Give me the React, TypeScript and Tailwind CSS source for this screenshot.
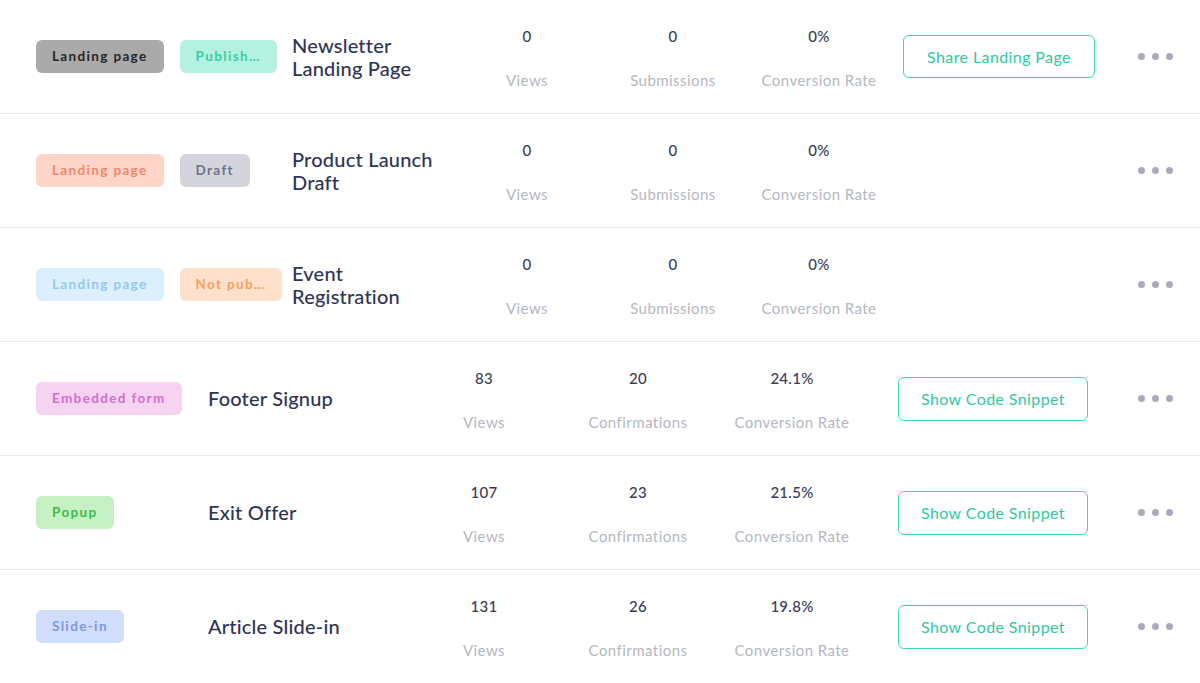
import React from "react";

type Badge = { label: string; className: string };

type Row = {
  kind: "landing" | "widget";
  badges: Badge[];
  title: string;
  views: string;
  second: string;
  secondLabel: string;
  rate: string;
  action?: string;
};

const rows: Row[] = [
  {
    kind: "landing",
    badges: [
      { label: "Landing page", className: "bg-[#aaaaaa] text-[#262626]" },
      { label: "Publish…", className: "bg-[#b4f1e1] text-[#38cfa5]" },
    ],
    title: "Newsletter Landing Page",
    views: "0",
    second: "0",
    secondLabel: "Submissions",
    rate: "0%",
    action: "Share Landing Page",
  },
  {
    kind: "landing",
    badges: [
      { label: "Landing page", className: "bg-[#fdd6c9] text-[#f2876b]" },
      { label: "Draft", className: "bg-[#d4d5dc] text-[#6f7388]" },
    ],
    title: "Product Launch Draft",
    views: "0",
    second: "0",
    secondLabel: "Submissions",
    rate: "0%",
  },
  {
    kind: "landing",
    badges: [
      { label: "Landing page", className: "bg-[#dbeffd] text-[#93c8f0]" },
      { label: "Not pub…", className: "bg-[#fee0cb] text-[#f7a063]" },
    ],
    title: "Event Registration",
    views: "0",
    second: "0",
    secondLabel: "Submissions",
    rate: "0%",
  },
  {
    kind: "widget",
    badges: [{ label: "Embedded form", className: "bg-[#f6d3f1] text-[#d46fcb]" }],
    title: "Footer Signup",
    views: "83",
    second: "20",
    secondLabel: "Confirmations",
    rate: "24.1%",
    action: "Show Code Snippet",
  },
  {
    kind: "widget",
    badges: [{ label: "Popup", className: "bg-[#c5f1c5] text-[#3cbc46]" }],
    title: "Exit Offer",
    views: "107",
    second: "23",
    secondLabel: "Confirmations",
    rate: "21.5%",
    action: "Show Code Snippet",
  },
  {
    kind: "widget",
    badges: [{ label: "Slide-in", className: "bg-[#d0ddfb] text-[#7c98e6]" }],
    title: "Article Slide-in",
    views: "131",
    second: "26",
    secondLabel: "Confirmations",
    rate: "19.8%",
    action: "Show Code Snippet",
  },
];

function Stat({ value, label, width }: { value: string; label: string; width: string }) {
  return (
    <div className={`flex flex-col items-center gap-6 pt-[3px] ${width}`}>
      <span className="text-[15px] leading-5 font-medium tracking-[0.02em] text-[#3a3d55]">{value}</span>
      <span className="text-[15px] leading-5 tracking-[0.03em] text-[#b5b7c4]">{label}</span>
    </div>
  );
}

function MoreDots() {
  return (
    <button className="ml-auto mr-[27px] flex items-center gap-[7px]">
      <span className="h-[7px] w-[7px] rounded-full bg-[#a9aabb]" />
      <span className="h-[7px] w-[7px] rounded-full bg-[#a9aabb]" />
      <span className="h-[7px] w-[7px] rounded-full bg-[#a9aabb]" />
    </button>
  );
}

function FormRow({ row }: { row: Row }) {
  const landing = row.kind === "landing";
  const statWidth = landing ? "w-[146px]" : "w-[154px]";

  return (
    <div className="flex h-[114px] items-center border-b border-[#e7e8ec] pl-9">
      <div className={`flex items-center gap-4 ${landing ? "w-[256px]" : "w-[172px]"}`}>
        {row.badges.map((b) => (
          <span
            key={b.label}
            className={`flex h-[33px] items-center rounded-md px-4 text-[13.5px] font-bold tracking-[0.1em] whitespace-nowrap ${b.className}`}
          >
            {b.label}
          </span>
        ))}
      </div>

      <div
        className={`text-[20px] leading-[23px] font-medium tracking-[0.01em] text-[#2f3454] ${
          landing ? "w-[162px] pr-3" : "w-[199px]"
        }`}
      >
        {row.title}
      </div>

      <Stat value={row.views} label="Views" width={statWidth} />
      <Stat value={row.second} label={row.secondLabel} width={statWidth} />
      <Stat value={row.rate} label="Conversion Rate" width={statWidth} />

      {row.action && (
        <button
          className={`flex items-center justify-center rounded-md border-[1.5px] border-[#3fd6b4] bg-white text-[16px] tracking-[0.025em] text-[#2fc9a4] ${
            landing ? "ml-[11px] h-[43px] w-[192px]" : "ml-[29px] h-[44px] w-[190px]"
          }`}
        >
          {row.action}
        </button>
      )}

      <MoreDots />
    </div>
  );
}

export default function App() {
  return (
    <div className="min-h-[683px] w-[1200px] bg-white font-['Lato',sans-serif]">
      {rows.map((row) => (
        <FormRow key={row.title} row={row} />
      ))}
    </div>
  );
}
